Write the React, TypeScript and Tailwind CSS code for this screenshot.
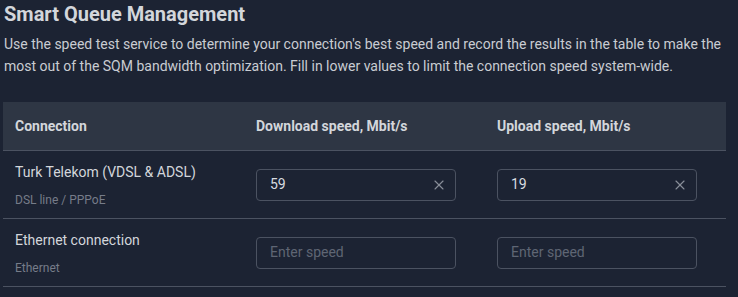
import { X } from 'lucide-react';

type Row = {
  name: string;
  type: string;
  download: string;
  upload: string;
};

const rows: Row[] = [
  { name: 'Turk Telekom (VDSL & ADSL)', type: 'DSL line / PPPoE', download: '59', upload: '19' },
  { name: 'Ethernet connection', type: 'Ethernet', download: '', upload: '' },
];

const SpeedInput = ({ value }: { value: string }) => (
  <div className="flex items-center w-[200px] h-[32px] rounded-[4px] border border-[#4b5261] pl-[13px] pr-[8px]">
    {value ? (
      <>
        <span className="flex-1 text-[14px] text-[#d8dbe0]">{value}</span>
        <X size={16} strokeWidth={1.6} className="text-[#8a909b]" />
      </>
    ) : (
      <span className="flex-1 text-[14px] text-[#5f6674]">Enter speed</span>
    )}
  </div>
);

export default function App() {
  return (
    <main className="min-h-[297px] w-[738px] bg-[#1c2333] pl-[3px] pr-[12px] font-['Roboto',sans-serif]">
      <h1 className="pl-[1px] text-[20px] leading-[28px] font-bold text-[#d3d6db]">Smart Queue Management</h1>
      <p className="mt-[5px] pl-[1px] text-[14px] leading-[22px] text-[#c9ccd2]">
        Use the speed test service to determine your connection's best speed and record the results in the table to make the most out of the SQM bandwidth optimization. Fill in lower values to limit the connection speed system-wide.
      </p>
      <div className="mt-[25px] w-[723px]">
        <div className="grid grid-cols-3 h-[49px] items-center bg-[#2e3644] border-b border-[#4b5261] text-[14px] font-bold text-[#d3d6db]">
          <div className="pl-[12px]">Connection</div>
          <div className="pl-[12px]">Download speed, Mbit/s</div>
          <div className="pl-[12px]">Upload speed, Mbit/s</div>
        </div>
        {rows.map((row, index) => (
          <div key={`row-${index}`} className="grid grid-cols-3 h-[68px] items-center border-b border-[#4b5261]">
            <div className="pl-[12px] self-start pt-[11px] flex flex-col">
              <span className="text-[14px] leading-[20px] text-[#d3d6db]">{row.name}</span>
              <span className="mt-[10px] text-[12px] leading-[16px] text-[#767c89]">{row.type}</span>
            </div>
            <div className="pl-[12px]">
              <SpeedInput value={row.download} />
            </div>
            <div className="pl-[12px]">
              <SpeedInput value={row.upload} />
            </div>
          </div>
        ))}
      </div>
    </main>
  );
}
